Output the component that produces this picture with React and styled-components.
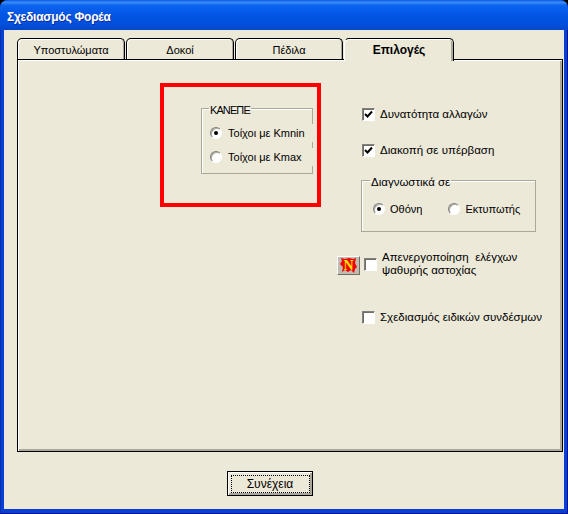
import React from 'react';
import styled, { createGlobalStyle } from 'styled-components';

const GlobalStyle = createGlobalStyle`
  html, body {
    margin: 0;
    padding: 0;
    background: #000;
  }
`;

const Window = styled.div`
  width: 568px;
  height: 514px;
  box-sizing: border-box;
  display: flex;
  flex-direction: column;
  border-radius: 8px 8px 0 0;
  overflow: hidden;
  background: #0a3fd6;
  box-shadow: inset -1px -1px 0 #00138c, inset 1px 0 0 #0831b0;
  font-family: "Liberation Sans", Arial, sans-serif;
  font-size: 11.5px;
  color: #000;
`;

const TitleBar = styled.div`
  height: 30px;
  flex: none;
  box-sizing: border-box;
  padding: 3px 0 0 7px;
  display: flex;
  align-items: center;
  color: #fff;
  font-size: 12px;
  letter-spacing: -0.25px;
  font-weight: 700;
  text-shadow: 1px 1px 0 #0f2d9c;
  background: linear-gradient(180deg, #0a5ae6 0%, #3b8cf8 8%, #0a64ee 18%, #0355e4 50%, #0250dc 80%, #0446c8 100%);
`;

const Client = styled.div`
  flex: 1;
  margin: 0 4px 5px;
  box-sizing: border-box;
  padding: 8px 1px 0 13px;
  background: #ece9d8;
  display: flex;
  flex-direction: column;
`;

const TabStrip = styled.div`
  display: flex;
  height: 21px;
  flex: none;
  position: relative;
  z-index: 1;
`;

const Tab = styled.div`
  width: ${p => (p.$active ? 110 : 108)}px;
  margin-right: ${p => (p.$active ? 0 : 1)}px;
  height: ${p => (p.$active ? 23 : 21)}px;
  box-sizing: border-box;
  padding-top: 2px;
  display: flex;
  align-items: ${p => (p.$active ? 'flex-start' : 'center')};
  justify-content: center;
  background: #ece9d8;
  font-size: ${p => (p.$active ? 12 : 11)}px;
  line-height: 18px;
  font-weight: ${p => (p.$active ? 700 : 400)};
  border-top: 1px solid #000;
  border-left: 1px solid ${p => (p.$active ? '#fff' : '#000')};
  border-right: 1px solid #000;
  border-radius: 5px 5px 0 0;
  box-shadow: ${p => (p.$active
    ? 'inset 0 1px 0 #fff, inset -2px 0 0 #aca899'
    : 'inset 1px 1px 0 #fff, inset -1px 0 0 #aca899')};
`;

const Panel = styled.div`
  width: 546px;
  height: 393px;
  flex: none;
  box-sizing: border-box;
  border: 1px solid #000;
  box-shadow: inset 1px 1px 0 #fff, inset -2px -2px 0 #aca899;
  display: flex;
  align-items: flex-start;
  padding: 23px 0 0 142px;
  gap: 17px;
`;

const RedBox = styled.div`
  width: 161px;
  height: 124px;
  flex: none;
  box-sizing: border-box;
  border: 4px solid #ff0000;
  padding: 12px 0 0 37px;
`;

const Group = styled.fieldset`
  margin: ${p => p.$top || 0}px 0 0 ${p => p.$left || 0}px;
  padding: 0;
  box-sizing: border-box;
  width: ${p => p.$width}px;
  height: ${p => p.$height}px;
  border: 1px solid #aca899;
  box-shadow: inset 1px 1px 0 #fff;
  min-width: 0;
`;

const GroupTitle = styled.legend`
  margin-left: ${p => p.$inset}px;
  padding: 4px 1px 0;
  font-size: ${p => (p.$caps ? 11 : 11.5)}px;
  letter-spacing: ${p => (p.$caps ? -0.9 : 0)}px;
  line-height: 14px;
`;

const RadioStack = styled.div`
  display: flex;
  flex-direction: column;
  gap: 6px;
  margin: 7px -1px 0 8px;
`;

const RadioRow = styled.label`
  display: flex;
  align-items: center;
  gap: 6px;
  height: 18px;
  background: #ece9d8;
  font-size: 11px;
  white-space: nowrap;
`;

const RadioMark = styled.span`
  width: 12px;
  height: 12px;
  flex: none;
  box-sizing: border-box;
  border-radius: 50%;
  background: #fff;
  border: 1px solid;
  border-color: #808080 #fff #fff #808080;
  box-shadow: inset 1px 1px 0 #aca899;
  display: flex;
  align-items: center;
  justify-content: center;

  &::after {
    content: '';
    width: 4px;
    height: 4px;
    border-radius: 50%;
    background: ${p => (p.$on ? '#000' : 'transparent')};
  }
`;

const OptionsColumn = styled.div`
  display: flex;
  flex-direction: column;
  align-items: flex-start;
  width: 210px;
`;

const CheckRow = styled.label`
  display: flex;
  align-items: center;
  gap: 5px;
  margin-top: ${p => p.$top}px;
  margin-left: ${p => p.$left}px;
  white-space: pre;
  line-height: ${p => (p.$multi ? '13px' : '14px')};
`;

const CheckMark = styled.span`
  width: 13px;
  height: 13px;
  flex: none;
  box-sizing: border-box;
  background: #fff;
  border: 1px solid;
  border-color: #808080 #fff #fff #808080;
  box-shadow: inset 1px 1px 0 #716f64;
  display: flex;
  align-items: center;
  justify-content: center;
`;

const InlineRadios = styled.div`
  display: flex;
  align-items: center;
  gap: 26px;
  margin: 14px 0 0 11px;
  font-size: 11px;
`;

const InlineRadio = styled.label`
  display: flex;
  align-items: center;
  gap: 5px;
  white-space: nowrap;
`;

const WarningRow = styled.div`
  display: flex;
  align-items: flex-start;
  margin: 24px 0 0 -1px;
`;

const IconButton = styled.button`
  width: 23px;
  height: 19px;
  padding: 0;
  flex: none;
  background: #c0bdb0;
  border: 1px solid;
  border-color: #fff #716f64 #716f64 #fff;
  display: flex;
  align-items: center;
  justify-content: center;
`;

const Footer = styled.div`
  flex: 1;
  display: flex;
  justify-content: center;
  align-items: flex-start;
  padding: 19px 40px 0 0;
`;

const ContinueButton = styled.button`
  width: 86px;
  height: 25px;
  padding: 0;
  box-sizing: border-box;
  background: #ece9d8;
  border: 1px solid #000;
  box-shadow: inset 1px 1px 0 #fff, inset -2px -2px 0 #aca899;
  font: 12px "Liberation Sans", Arial, sans-serif;
  color: #000;
  display: flex;
  align-items: center;
  justify-content: center;
`;

const FocusRing = styled.span`
  width: 79px;
  height: 18px;
  display: flex;
  align-items: center;
  justify-content: center;
  box-sizing: border-box;
  border: 1px dotted #000;
`;

const Tick = () => (
  <svg width="9" height="9" viewBox="0 0 9 9">
    <path d="M1 4 L3.5 6.5 L8 1.5" fill="none" stroke="#000" strokeWidth="2" />
  </svg>
);

const SplatIcon = () => (
  <svg width="17" height="16" viewBox="0 0 17 16">
    <polygon
      fill="#f00000"
      points="1,0 5,1 9,0 13,1 16,0 15,5 17,9 15,11 14,15 11,12 8,14 5,12 2,14 3,9 0,6 2,3"
    />
    <text x="8.5" y="12" textAnchor="middle" fontFamily="Liberation Serif" fontWeight="700" fontSize="14" fill="#ffe600">N</text>
  </svg>
);

const tabs = ['Υποστυλώματα', 'Δοκοί', 'Πέδιλα', 'Επιλογές'];

export default function App() {
  return (
    <Window>
      <GlobalStyle />
      <TitleBar>Σχεδιασμός Φορέα</TitleBar>
      <Client>
        <TabStrip>
          {tabs.map(t => (
            <Tab key={t} $active={t === 'Επιλογές'}>{t}</Tab>
          ))}
        </TabStrip>
        <Panel>
          <RedBox>
            <Group $width={112} $height={75}>
              <GroupTitle $inset={7} $caps>ΚΑΝΕΠΕ</GroupTitle>
              <RadioStack>
                <RadioRow><RadioMark $on />Τοίχοι με Kmnin</RadioRow>
                <RadioRow><RadioMark />Τοίχοι με Kmax</RadioRow>
              </RadioStack>
            </Group>
          </RedBox>
          <OptionsColumn>
            <CheckRow $top={24} $left={24}><CheckMark><Tick /></CheckMark>Δυνατότητα αλλαγών</CheckRow>
            <CheckRow $top={22} $left={24}><CheckMark><Tick /></CheckMark>Διακοπή σε υπέρβαση</CheckRow>
            <Group $top={14} $left={23} $width={175} $height={61}>
              <GroupTitle $inset={8}>Διαγνωστικά σε</GroupTitle>
              <InlineRadios>
                <InlineRadio><RadioMark $on />Οθόνη</InlineRadio>
                <InlineRadio><RadioMark />Εκτυπωτής</InlineRadio>
              </InlineRadios>
            </Group>
            <WarningRow>
              <IconButton><SplatIcon /></IconButton>
              <CheckRow $top={-5} $left={4} $multi>
                <CheckMark />
                <span>{'Απενεργοποίηση  ελέγχων\nψαθυρής αστοχίας'}</span>
              </CheckRow>
            </WarningRow>
            <CheckRow $top={33} $left={24}><CheckMark />Σχεδιασμός ειδικών συνδέσμων</CheckRow>
          </OptionsColumn>
        </Panel>
        <Footer>
          <ContinueButton><FocusRing>Συνέχεια</FocusRing></ContinueButton>
        </Footer>
      </Client>
    </Window>
  );
}
